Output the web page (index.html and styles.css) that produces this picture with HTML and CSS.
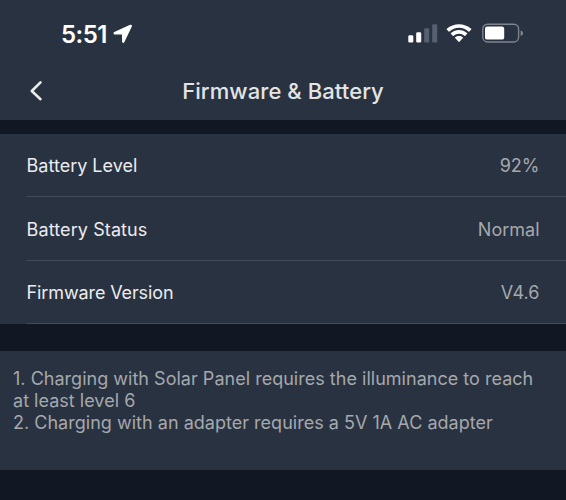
FILE: index.html
```html
<!DOCTYPE html>
<html lang="en">
<head>
<meta charset="utf-8">
<title>Firmware &amp; Battery</title>
<link rel="stylesheet" href="styles.css">
</head>
<body>
<header class="header">
  <div class="status-bar">
    <div class="clock">
      <span class="time">5:51</span>
      <svg class="location" width="20" height="20" viewBox="0 0 20 20"><path d="M17.400 1.500 1.600 8.700C1 9 1.100 9.700 1.800 9.700L9.600 9.900 9.800 17.600C9.800 18.300 10.500 18.400 10.800 17.700L18.200 2.200C18.400 1.600 18 1.200 17.400 1.500Z"/></svg>
    </div>
    <div class="indicators">
      <svg class="signal" width="30" height="20" viewBox="0 0 30 20"><rect x=".3" y="11.300" width="5" height="7.300" rx="1.300"/><rect x="8.200" y="8.300" width="5" height="10.300" rx="1.300"/><g class="faint"><rect x="16.200" y="4.300" width="5" height="14.300" rx="1.300"/><rect x="24.200" y=".3" width="5" height="18.300" rx="1.300"/></g></svg>
      <svg class="wifi" width="26" height="20" viewBox="0 0 26 20"><path d="M13 3.700C16.700 3.700 20 5.100 22.500 7.500Q22.900 7.900 23.300 7.500L25.200 5.600Q25.600 5.200 25.200 4.800C18.300-1.300 7.700-1.300.8 4.800Q.400 5.200.8 5.600L2.700 7.500Q3.100 7.900 3.500 7.500C6 5.100 9.300 3.700 13 3.700Z"/><path d="M13 9.700C15.100 9.700 17 10.500 18.400 11.700Q18.900 12.100 19.300 11.700L21.100 9.800Q21.500 9.400 21 9C16.500 5.100 9.500 5.100 5 9Q4.500 9.400 4.900 9.800L6.700 11.700Q7.100 12.100 7.600 11.700C9 10.500 10.900 9.700 13 9.700Z"/><path d="M16.900 14.100Q17.300 13.700 16.800 13.300C14.700 11.600 11.300 11.600 9.200 13.300Q8.700 13.700 9.100 14.100L12.600 17.700Q13 18.100 13.400 17.700Z"/></svg>
      <svg class="battery" width="42" height="20" viewBox="0 0 42 20"><rect class="shell" x=".8" y="1.200" width="35.800" height="17.800" rx="4.800"/><rect x="3" y="3.600" width="19.200" height="13" rx="2.200"/><path class="cap" d="M38.700 7.400Q41 8.200 41 10.200T38.700 13Z"/></svg>
    </div>
  </div>
  <nav class="nav">
    <svg class="back" width="14" height="22" viewBox="0 0 14 22"><path d="M11.500 2.400 2.800 11 11.500 19.200"/></svg>
    <h1 class="title">Firmware &amp; Battery</h1>
  </nav>
</header>
<dl class="list">
  <div class="row"><dt class="level">Battery Level</dt><dd>92%</dd></div>
  <div class="row"><dt class="state">Battery Status</dt><dd>Normal</dd></div>
  <div class="row"><dt class="version">Firmware Version</dt><dd>V4.6</dd></div>
</dl>
<section class="notes">
  <p>1. Charging with Solar Panel requires the illuminance to reach<br>at least level 6</p>
  <p class="adapter">2. Charging with an adapter requires a 5V 1A AC adapter</p>
</section>
</body>
</html>
```
FILE: styles.css
```css
* { box-sizing: border-box; margin: 0; padding: 0; }

body {
  height: 500px;
  overflow: hidden;
  background: #121823;
  color: #ececee;
  font-family: Inter, "Liberation Sans", sans-serif;
  font-size: 18px;
}

svg { display: block; fill: #fff; }

.header { height: 120px; background: #293241; }

.status-bar {
  display: flex;
  justify-content: space-between;
  height: 64px;
  padding: 20px 42px 0 61px;
}
.clock { display: flex; gap: 6px; height: 28px; }
.time { padding-top: 1px; color: #fff; font-size: 24px; font-weight: 600; line-height: 28px; letter-spacing: -.5px; }
.location { margin-top: 4px; stroke: #fff; stroke-width: 1.400; stroke-linejoin: round; }

.indicators { display: flex; padding-top: 4px; }
.signal .faint { fill: #566070; }
.wifi { margin-left: 8px; }
.wifi + .battery { margin-left: 10px; }
.battery { margin-top: -1px; }
.battery .shell { fill: none; stroke: #7d848e; stroke-width: 1.400; }
.battery .cap { fill: #858b95; }

.nav {
  display: grid;
  grid-template-columns: 32px 1fr 32px;
  align-items: center;
  height: 54px;
  padding: 0 29px;
}
.back { fill: none; stroke: #ececee; stroke-width: 2.600; stroke-linecap: round; stroke-linejoin: round; }
.title { color: #e3e4e6; font-size: 22px; font-weight: 500; line-height: 28px; letter-spacing: .08px; text-align: center; white-space: nowrap; }

.list { height: 190px; margin-top: 14px; background: #293241; }
.row {
  display: flex;
  align-items: center;
  justify-content: space-between;
  height: 63.400px;
  margin-left: 26px;
  padding: 1px 26.500px 0 .6px;
  border-bottom: 1px solid #414a58;
}
.state { letter-spacing: .1px; }
.version { letter-spacing: -.12px; }
dd { color: #a5a8ac; }

.notes {
  height: 119px;
  margin-top: 27px;
  padding: 17px 13px;
  background: #293241;
  color: #a5a8ac;
  line-height: 22px;
  letter-spacing: .02px;
  white-space: nowrap;
}
```
